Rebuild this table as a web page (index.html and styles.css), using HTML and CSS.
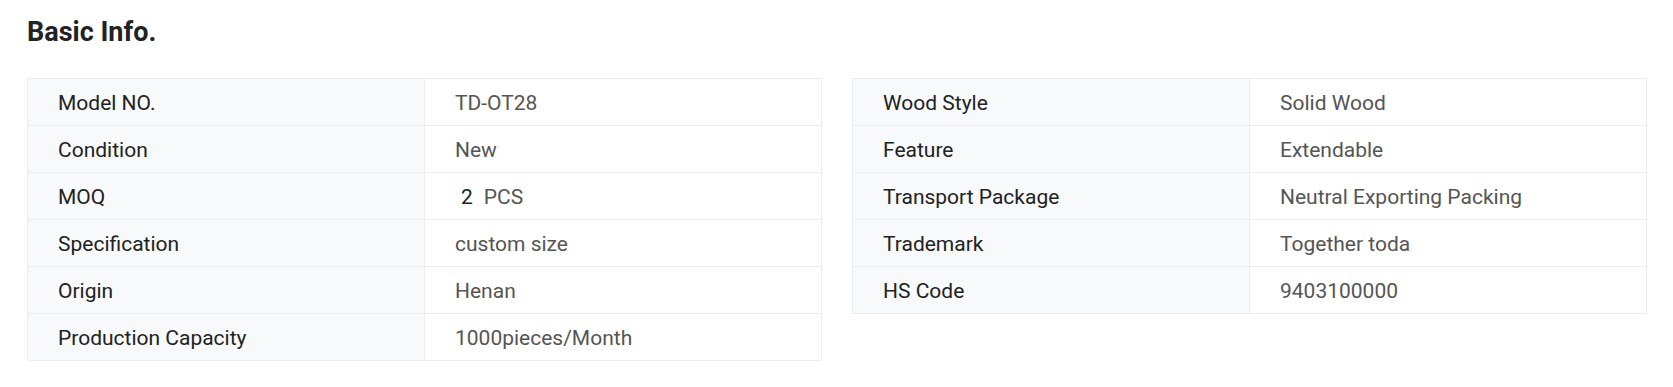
FILE: index.html
```html
<!DOCTYPE html>
<html>
<head>
<meta charset="utf-8">
<link rel="stylesheet" href="styles.css">
</head>
<body>
<div class="page">
  <h2 class="title">Basic Info.</h2>
  <div class="tables">
    <table class="info">
      <tr><th>Model NO.</th><td>TD-OT28</td></tr>
      <tr><th>Condition</th><td>New</td></tr>
      <tr><th>MOQ</th><td><span class="num">2</span>PCS</td></tr>
      <tr><th>Specification</th><td>custom size</td></tr>
      <tr><th>Origin</th><td>Henan</td></tr>
      <tr><th>Production Capacity</th><td>1000pieces/Month</td></tr>
    </table>
    <table class="info">
      <tr><th>Wood Style</th><td>Solid Wood</td></tr>
      <tr><th>Feature</th><td>Extendable</td></tr>
      <tr><th>Transport Package</th><td>Neutral Exporting Packing</td></tr>
      <tr><th>Trademark</th><td>Together toda</td></tr>
      <tr><th>HS Code</th><td>9403100000</td></tr>
    </table>
  </div>
</div>
</body>
</html>
```
FILE: styles.css
```css
html, body {
  margin: 0;
  padding: 0;
  background: #fff;
}
.page {
  padding: 14px 26px 0 27px;
  font-family: Roboto, "Liberation Sans", Arial, sans-serif;
}
.title {
  margin: 0;
  font-size: 27px;
  font-weight: 700;
  color: #222;
  line-height: 36px;
  height: 64px;
}
.tables {
  display: grid;
  grid-template-columns: 1fr 1fr;
  gap: 30px;
  align-items: start;
}
.info {
  width: 100%;
  border-collapse: collapse;
  table-layout: fixed;
  border: 1px solid #ebedf0;
}
.info th, .info td {
  border: 1px solid #ebedf0;
  height: 47px;
  padding: 2px 0 0 30px;
  font-size: 21px;
  font-weight: 400;
  text-align: left;
  box-sizing: border-box;
}
.info th {
  background: #f8f9fb;
  color: #222;
}
.info td {
  background: #fff;
  color: #555;
}
.num {
  color: #222;
  padding: 0 11px 0 6px;
}
```
